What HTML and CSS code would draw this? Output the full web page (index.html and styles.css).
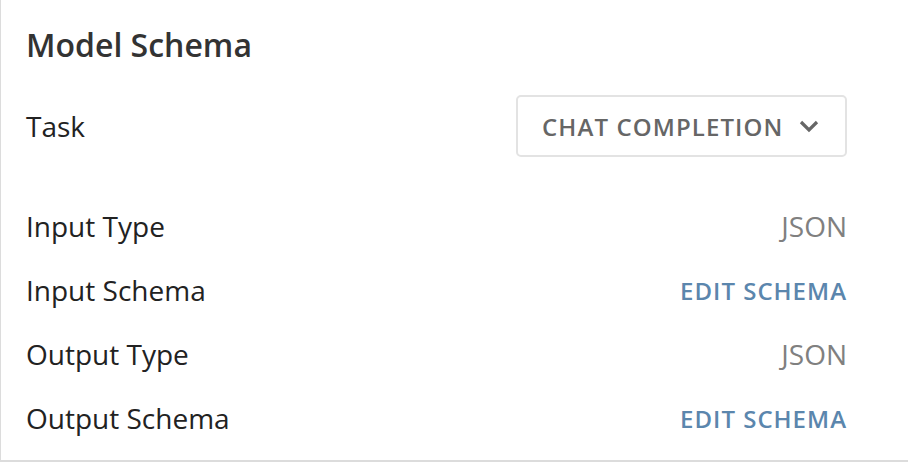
FILE: index.html
```html
<!DOCTYPE html>
<html>
<head>
<meta charset="utf-8">
<link rel="stylesheet" href="styles.css">
</head>
<body>
<div class="card">
  <h2 class="title">Model Schema</h2>
  <div class="row task-row">
    <span class="label">Task</span>
    <button class="select">
      <span class="select-text">CHAT COMPLETION</span>
      <svg class="chev" width="20" height="14" viewBox="0 0 20 14"><path d="M2 3 L10 11 L18 3" fill="none" stroke="#666" stroke-width="3.2"/></svg>
    </button>
  </div>
  <div class="rows">
    <div class="row"><span class="label">Input Type</span><span class="value">JSON</span></div>
    <div class="row"><span class="label">Input Schema</span><a class="link">EDIT SCHEMA</a></div>
    <div class="row"><span class="label">Output Type</span><span class="value">JSON</span></div>
    <div class="row"><span class="label">Output Schema</span><a class="link">EDIT SCHEMA</a></div>
  </div>
</div>
</body>
</html>
```
FILE: styles.css
```css
html, body {
  margin: 0;
  padding: 0;
  background: #fff;
}
body {
  font-family: "Open Sans", "Liberation Sans", sans-serif;
  color: #222;
}
.card {
  width: 908px;
  height: 462px;
  box-sizing: border-box;
  border-left: 1px solid #dcdcdc;
  border-bottom: 2px solid #dcdcdc;
  padding: 0 61px 0 25px;
}
.title {
  margin: 0;
  padding-top: 23px;
  font-size: 32px;
  font-weight: 600;
  line-height: 44px;
  color: #333;
}
.row {
  display: flex;
  justify-content: space-between;
  align-items: center;
  height: 64px;
}
.task-row {
  margin-top: 28px;
  height: 62px;
}
.rows {
  margin-top: 37px;
}
.label {
  font-size: 28px;
  color: #222;
}
.select {
  display: flex;
  align-items: center;
  flex-shrink: 0;
  gap: 16px;
  box-sizing: border-box;
  width: 331px;
  height: 62px;
  padding: 0 24px 0 24px;
  border: 2px solid #e3e3e3;
  border-radius: 5px;
  background: #fff;
  font-family: inherit;
  font-size: 24px;
  font-weight: 600;
  letter-spacing: 1.1px;
  color: #666;
  white-space: nowrap;
}
.select-text {
  white-space: nowrap;
}
.chev {
  display: block;
  flex-shrink: 0;
}
.value {
  font-size: 28px;
  color: #808080;
}
.link {
  font-size: 24px;
  font-weight: 600;
  letter-spacing: 1px;
  color: #5b86ad;
  white-space: nowrap;
}
```
